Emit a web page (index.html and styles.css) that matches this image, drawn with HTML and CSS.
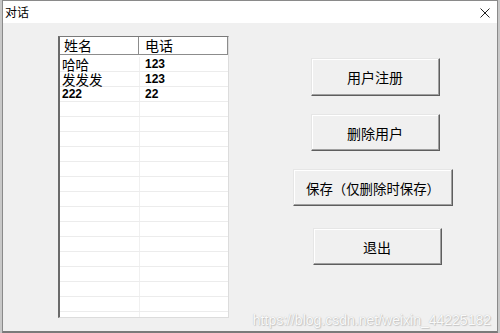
FILE: index.html
```html
<!DOCTYPE html>
<html lang="zh-CN">

<head>
    <meta charset="UTF-8">
    <meta name="viewport" content="width=device-width, initial-scale=1.0">
    <title>对话</title>
    <link rel="stylesheet" href="styles.css">
</head>

<body>
    <div class="window">
        <div class="titlebar">
            <span class="title">对话</span>
            <svg class="close" width="10" height="10" viewBox="0 0 10 10">
                <path d="M0.5 0.5 L9.5 9.5 M9.5 0.5 L0.5 9.5" stroke="#222" stroke-width="1" fill="none" />
            </svg>
        </div>

        <div class="client">
            <div class="listview">
                <div class="lv-header">
                    <div class="hcell name">姓名</div>
                    <div class="hcell phone">电话</div>
                </div>
                <div class="lv-body">
                    <div class="row"><div class="cell name">哈哈</div><div class="cell phone num">123</div></div>
                    <div class="row"><div class="cell name">发发发</div><div class="cell phone num">123</div></div>
                    <div class="row"><div class="cell name num">222</div><div class="cell phone num">22</div></div>
                    <div class="row"><div class="cell name"></div><div class="cell phone"></div></div>
                    <div class="row"><div class="cell name"></div><div class="cell phone"></div></div>
                    <div class="row"><div class="cell name"></div><div class="cell phone"></div></div>
                    <div class="row"><div class="cell name"></div><div class="cell phone"></div></div>
                    <div class="row"><div class="cell name"></div><div class="cell phone"></div></div>
                    <div class="row"><div class="cell name"></div><div class="cell phone"></div></div>
                    <div class="row"><div class="cell name"></div><div class="cell phone"></div></div>
                    <div class="row"><div class="cell name"></div><div class="cell phone"></div></div>
                    <div class="row"><div class="cell name"></div><div class="cell phone"></div></div>
                    <div class="row"><div class="cell name"></div><div class="cell phone"></div></div>
                    <div class="row"><div class="cell name"></div><div class="cell phone"></div></div>
                    <div class="row"><div class="cell name"></div><div class="cell phone"></div></div>
                    <div class="row"><div class="cell name"></div><div class="cell phone"></div></div>
                    <div class="row"><div class="cell name"></div><div class="cell phone"></div></div>
                    <div class="row"><div class="cell name"></div><div class="cell phone"></div></div>
                </div>
            </div>

            <div class="actions">
                <button class="btn btn-tall">用户注册</button>
                <button class="btn">删除用户</button>
                <button class="btn btn-wide">保存（仅删除时保存）</button>
                <button class="btn btn-last">退出</button>
            </div>

            <div class="watermark">https://blog.csdn.net/weixin_44225182</div>
        </div>
    </div>
</body>

</html>
```

FILE: styles.css
```css
body {
    margin: 0;
    padding: 0;
    background-color: #c8c8c8;
    font-family: "Noto Sans CJK SC", "Liberation Sans", sans-serif;
    color: #000;
}

.window {
    margin-left: 2px;
    width: 496px;
    height: 333px;
    box-sizing: border-box;
    border: 1px solid #8a8a8a;
    border-bottom: 2px solid #7a7a7a;
    background-color: #f0f0f0;
    display: flex;
    flex-direction: column;
}

.titlebar {
    height: 22px;
    background-color: #fff;
    display: flex;
    align-items: center;
    justify-content: space-between;
    padding: 0 7px 0 2px;
}

.title {
    font-size: 12px;
    line-height: 22px;
}

.close {
    display: block;
    margin-top: 1px;
}

.client {
    position: relative;
    flex: 1;
    display: flex;
    align-items: flex-start;
    padding: 13px 0 0 55px;
}

/* list view */
.listview {
    width: 171px;
    height: 282px;
    box-sizing: border-box;
    background-color: #fff;
    border-top: 1px solid #7a7a7a;
    border-left: 2px solid #6a6a6a;
    border-right: 1px solid #dcdcdc;
    border-bottom: 1px solid #dcdcdc;
    overflow: hidden;
}

.lv-header {
    display: flex;
    height: 18px;
    box-sizing: border-box;
    border-bottom: 1px solid #8c8c8c;
    border-right: 1px solid #8c8c8c;
}

.hcell {
    font-size: 14px;
    line-height: 17px;
    padding-left: 4px;
    box-sizing: border-box;
}

.hcell.name {
    width: 79px;
    border-right: 1px solid #8c8c8c;
}

.hcell.phone {
    flex: 1;
    padding-left: 6px;
}

.row {
    display: flex;
    height: 15px;
    box-sizing: border-box;
    border-bottom: 1px solid #ececec;
}

.row:first-child {
    height: 17px;
    padding-top: 2px;
}

.cell {
    font-size: 13.5px;
    line-height: 14px;
    padding-left: 2px;
    box-sizing: border-box;
    white-space: nowrap;
}

.cell.name {
    width: 80px;
    border-right: 1px solid #f0f0f0;
}

.cell.phone {
    flex: 1;
    padding-left: 5px;
}

.cell.num {
    font-family: "Liberation Sans", sans-serif;
    font-weight: bold;
    font-size: 12px;
    line-height: 14px;
}

/* buttons */
.actions {
    width: 180px;
    margin-left: 56px;
    padding-top: 22px;
    display: flex;
    flex-direction: column;
    align-items: center;
    gap: 18px;
}

.btn {
    width: 129px;
    height: 37px;
    box-sizing: border-box;
    background-color: #f0f0f0;
    border: 1px solid;
    border-color: #e6e6e6 #5e5e5e #5e5e5e #e6e6e6;
    box-shadow: inset -1px -1px 0 #a0a0a0, inset 1px 1px 0 #fff;
    font-family: "Noto Sans CJK SC", sans-serif;
    font-size: 14px;
    color: #000;
    padding: 0;
    cursor: pointer;
}

.btn-tall {
    height: 38px;
}

.btn-wide {
    width: 160px;
    font-size: 13.4px;
    margin-right: 4px;
}

.btn-last {
    margin-top: 4px;
    margin-left: 4px;
}

.watermark {
    position: absolute;
    right: 6px;
    bottom: 3px;
    font-family: "Liberation Sans", sans-serif;
    font-size: 14px;
    line-height: 15px;
    color: #fafafa;
    text-shadow: 0 0 1px #b0b0b0, 1px 1px 1px #c8c8c8;
}
```
